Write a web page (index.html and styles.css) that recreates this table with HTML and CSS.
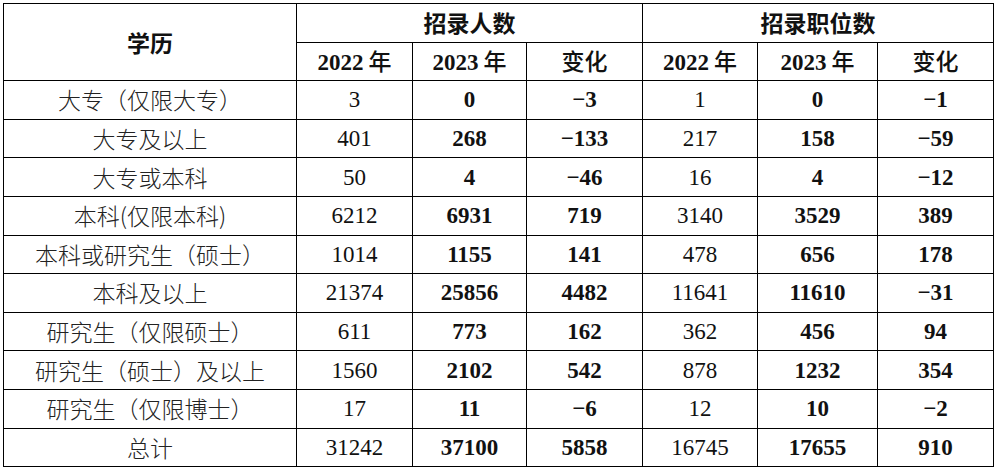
FILE: index.html
```html
<!DOCTYPE html>
<html lang="zh">
<head>
<meta charset="utf-8">
<link rel="stylesheet" href="styles.css">
</head>
<body>
<table class="stats">
  <colgroup>
    <col class="c-label">
    <col class="c-a"><col class="c-b"><col class="c-c">
    <col class="c-d"><col class="c-e"><col class="c-f">
  </colgroup>
  <thead>
    <tr>
      <th rowspan="2" class="h-main">学历</th>
      <th colspan="3" class="h-main">招录人数</th>
      <th colspan="3" class="h-main">招录职位数</th>
    </tr>
    <tr>
      <th class="h-sub">2022<span class="yr">年</span></th>
      <th class="h-sub">2023<span class="yr">年</span></th>
      <th class="h-sub"><span class="cjk">变化</span></th>
      <th class="h-sub">2022<span class="yr">年</span></th>
      <th class="h-sub">2023<span class="yr">年</span></th>
      <th class="h-sub"><span class="cjk">变化</span></th>
    </tr>
  </thead>
  <tbody>
    <tr><td class="label">大专（仅限大专）</td><td>3</td><td class="b">0</td><td class="b">−3</td><td>1</td><td class="b">0</td><td class="b">−1</td></tr>
    <tr><td class="label">大专及以上</td><td>401</td><td class="b">268</td><td class="b">−133</td><td>217</td><td class="b">158</td><td class="b">−59</td></tr>
    <tr><td class="label">大专或本科</td><td>50</td><td class="b">4</td><td class="b">−46</td><td>16</td><td class="b">4</td><td class="b">−12</td></tr>
    <tr><td class="label">本科(仅限本科)</td><td>6212</td><td class="b">6931</td><td class="b">719</td><td>3140</td><td class="b">3529</td><td class="b">389</td></tr>
    <tr><td class="label">本科或研究生（硕士）</td><td>1014</td><td class="b">1155</td><td class="b">141</td><td>478</td><td class="b">656</td><td class="b">178</td></tr>
    <tr><td class="label">本科及以上</td><td>21374</td><td class="b">25856</td><td class="b">4482</td><td>11641</td><td class="b">11610</td><td class="b">−31</td></tr>
    <tr><td class="label">研究生（仅限硕士）</td><td>611</td><td class="b">773</td><td class="b">162</td><td>362</td><td class="b">456</td><td class="b">94</td></tr>
    <tr><td class="label">研究生（硕士）及以上</td><td>1560</td><td class="b">2102</td><td class="b">542</td><td>878</td><td class="b">1232</td><td class="b">354</td></tr>
    <tr><td class="label">研究生（仅限博士）</td><td>17</td><td class="b">11</td><td class="b">−6</td><td>12</td><td class="b">10</td><td class="b">−2</td></tr>
    <tr><td class="label">总计</td><td>31242</td><td class="b">37100</td><td class="b">5858</td><td>16745</td><td class="b">17655</td><td class="b">910</td></tr>
  </tbody>
</table>
</body>
</html>
```

FILE: styles.css
```css
html, body {
  margin: 0;
  padding: 0;
  background: #fff;
}
body {
  padding: 3px 0 0 3px;
}
.stats {
  border-collapse: collapse;
  table-layout: fixed;
  width: 990px;
  font-family: "Liberation Serif", "Noto Sans CJK SC", serif;
  font-size: 23px;
  color: #111;
}
.c-label { width: 293px; }
.c-a { width: 116px; }
.c-b { width: 114px; }
.c-c { width: 116px; }
.c-d { width: 115px; }
.c-e { width: 120px; }
.c-f { width: 116px; }

.stats th, .stats td {
  border: 1.3px solid #000;
  text-align: center;
  vertical-align: middle;
  padding: 0;
  line-height: 1;
}
.stats tr {
  height: 38.6px;
}
.h-main {
  font-family: "Noto Sans CJK SC", sans-serif;
  font-weight: 700;
  font-size: 23px;
}
.h-sub {
  font-weight: 700;
}
.yr, .cjk {
  font-family: "Noto Sans CJK SC", sans-serif;
  font-weight: 500;
}
.yr {
  margin-left: 5px;
}
.label {
  font-family: "Noto Sans CJK SC", sans-serif;
  font-weight: 300;
  color: #222;
}
.b {
  font-weight: 700;
}
```
